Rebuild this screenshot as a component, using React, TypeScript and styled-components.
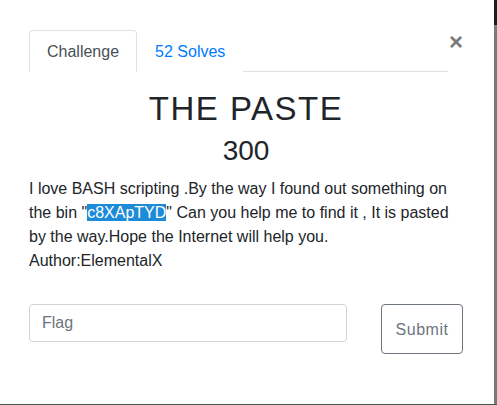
import React from "react";
import styled, { createGlobalStyle } from "styled-components";

const Global = createGlobalStyle`
  html, body { margin: 0; padding: 0; background: #ffffff; }
  body { font-family: "Liberation Sans", Arial, sans-serif; color: #212529; }
  * { box-sizing: border-box; }
`;

const Frame = styled.div`
  width: 497px;
  height: 405px;
  display: flex;
  flex-direction: column;
  overflow: hidden;
`;

const Row = styled.div`
  display: flex;
  flex: 1;
  min-height: 0;
`;

const Modal = styled.div`
  flex: 1;
  min-width: 0;
  background: #ffffff;
  padding: 30px 31px 0 29px;
`;

const ScrollStrip = styled.div`
  width: 3px;
  flex-shrink: 0;
  background: linear-gradient(to bottom, #1e1e1e 0, #1e1e1e 25px, #7a7a7a 25px, #7a7a7a 100%);
`;

const BottomEdge = styled.div`
  height: 1px;
  flex-shrink: 0;
  background: #485840;
`;

const Header = styled.div`
  display: flex;
  align-items: flex-start;
`;

const Close = styled.button`
  margin-left: 1px;
  width: 14px;
  border: none;
  background: transparent;
  padding: 0;
  font-family: "Liberation Sans", Arial, sans-serif;
  font-size: 24px;
  font-weight: 700;
  line-height: 1;
  color: #7a7a7a;
  display: flex;
  justify-content: center;
  cursor: pointer;
`;

const Tabs = styled.div`
  flex: 1;
  display: flex;
  border-bottom: 1px solid #dee2e6;
  height: 42px;
`;

const Tab = styled.div<{ $active?: boolean }>`
  height: 42px;
  padding: 2px 17px 0;
  display: flex;
  align-items: center;
  font-size: 16px;
  border: 1px solid ${(p) => (p.$active ? "#dee2e6" : "transparent")};
  border-bottom-color: ${(p) => (p.$active ? "#ffffff" : "transparent")};
  border-radius: 4px 4px 0 0;
  background: #ffffff;
  color: ${(p) => (p.$active ? "#495057" : "#007bff")};
  margin-bottom: -1px;
`;

const Title = styled.h3`
  margin: 18px 0 0;
  text-align: center;
  font-size: 33px;
  font-weight: 400;
  letter-spacing: 1.5px;
  line-height: 38px;
  color: #212529;
`;

const Value = styled.h4`
  margin: 6px 0 0;
  text-align: center;
  font-size: 28px;
  font-weight: 400;
  line-height: 34px;
  color: #212529;
`;

const Desc = styled.p`
  margin: 9px 0 0;
  font-size: 16px;
  line-height: 24px;
  color: #212529;
`;

const Mark = styled.span`
  background: #1d8bd8;
  color: #ffffff;
`;

const SubmitRow = styled.div`
  display: flex;
  align-items: flex-start;
  margin-top: 31px;
`;

const FlagInput = styled.input`
  flex-shrink: 0;
  width: 318px;
  height: 38px;
  border: 1px solid #ced4da;
  border-radius: 4px;
  padding: 0 12px;
  font-family: "Liberation Sans", Arial, sans-serif;
  font-size: 16px;
  color: #495057;
  outline: none;
  &::placeholder { color: #6c757d; }
`;

const SubmitButton = styled.button`
  flex-shrink: 0;
  margin-left: 34px;
  width: 82px;
  height: 50px;
  border: 1px solid #6c757d;
  border-radius: 4px;
  background: #ffffff;
  color: #6c757d;
  font-family: "Liberation Sans", Arial, sans-serif;
  font-size: 16px;
  letter-spacing: 0.5px;
  padding: 2px 0 0;
`;

export default function App() {
  return (
    <>
      <Global />
      <Frame>
        <Row>
          <Modal>
            <Header>
              <Tabs>
                <Tab $active>Challenge</Tab>
                <Tab>52 Solves</Tab>
              </Tabs>
              <Close aria-label="Close">×</Close>
            </Header>
            <Title>THE PASTE</Title>
            <Value>300</Value>
            <Desc>
              I love BASH scripting .By the way I found out something on the bin "
              <Mark>c8XApTYD</Mark>" Can you help me to find it , It is pasted by the way.Hope
              the Internet will help you.
              <br />
              Author:ElementalX
            </Desc>
            <SubmitRow>
              <FlagInput placeholder="Flag" />
              <SubmitButton>Submit</SubmitButton>
            </SubmitRow>
          </Modal>
          <ScrollStrip />
        </Row>
        <BottomEdge />
      </Frame>
    </>
  );
}
